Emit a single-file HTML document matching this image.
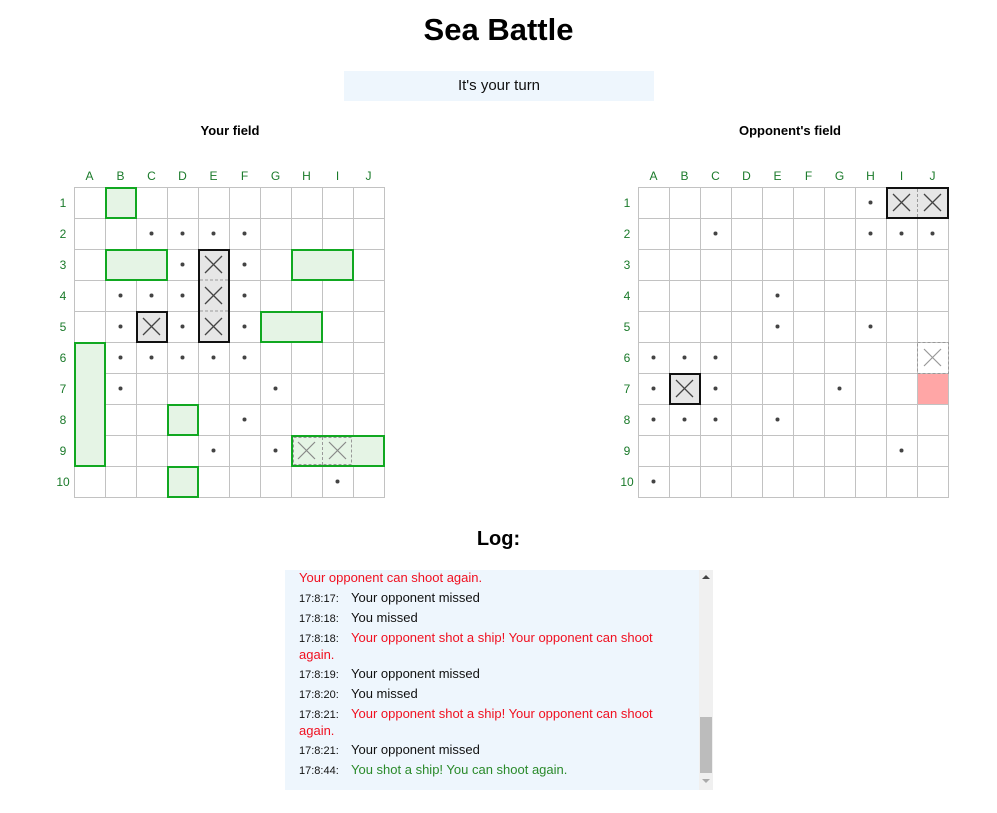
<!DOCTYPE html>
<html><head><meta charset="utf-8"><style>
body{margin:0;background:#fff;font-family:"Liberation Sans",Arial,sans-serif;width:997px;height:813px;position:relative;overflow:hidden}
.a{position:absolute}
h1{position:absolute;left:0;width:997px;top:12px;margin:0;text-align:center;font-size:31px;font-weight:bold;color:#000}
.status{left:344px;top:71px;width:310px;height:30px;background:#eef6fd;text-align:center;line-height:30px;font-size:15px;color:#111}
.ft{font-size:13px;font-weight:bold;top:123px;text-align:center;width:300px}
.field{width:311px;height:311px;top:187px;background-image:linear-gradient(to right,#c2c2c2 1px,transparent 1px),linear-gradient(#c2c2c2 1px,transparent 1px);background-size:31px 31px}
.ship{position:absolute;box-sizing:border-box;border:2px solid #11a821;background:#e5f4e5}
.sunk{position:absolute;box-sizing:border-box;border:2px solid #111;background:#e6e6e6}
.cols,.rows{font-size:12px;color:#1a7a2a}
.cols span{position:absolute;top:0;width:31px;text-align:center}
.rows span{position:absolute;left:0;width:20px;text-align:center}
.log{left:285px;top:570px;width:428px;height:220px;background:#eef6fd;overflow:hidden}
.e{position:absolute;left:14px;width:390px;font-size:13px;line-height:16px;color:#111}
.e i{font-style:normal;font-size:11px;display:inline-block;width:52px}
.r{color:#f01020}.g{color:#2a8a2a}
</style></head><body>
<h1>Sea Battle</h1>
<div class="a status">It's your turn</div>
<div class="a ft" style="left:80px">Your field</div>
<div class="a ft" style="left:640px">Opponent's field</div>

<div class="a cols" style="left:74px;top:169px"><span style="left:0">A</span><span style="left:31px">B</span><span style="left:62px">C</span><span style="left:93px">D</span><span style="left:124px">E</span><span style="left:155px">F</span><span style="left:186px">G</span><span style="left:217px">H</span><span style="left:248px">I</span><span style="left:279px">J</span></div>
<div class="a cols" style="left:638px;top:169px"><span style="left:0">A</span><span style="left:31px">B</span><span style="left:62px">C</span><span style="left:93px">D</span><span style="left:124px">E</span><span style="left:155px">F</span><span style="left:186px">G</span><span style="left:217px">H</span><span style="left:248px">I</span><span style="left:279px">J</span></div>
<div class="a rows" style="left:53px;top:196px"><span style="top:0">1</span><span style="top:31px">2</span><span style="top:62px">3</span><span style="top:93px">4</span><span style="top:124px">5</span><span style="top:155px">6</span><span style="top:186px">7</span><span style="top:217px">8</span><span style="top:248px">9</span><span style="top:279px">10</span></div>
<div class="a rows" style="left:617px;top:196px"><span style="top:0">1</span><span style="top:31px">2</span><span style="top:62px">3</span><span style="top:93px">4</span><span style="top:124px">5</span><span style="top:155px">6</span><span style="top:186px">7</span><span style="top:217px">8</span><span style="top:248px">9</span><span style="top:279px">10</span></div>

<div class="a field" style="left:74px">
<div class="ship" style="left:31px;top:0;width:32px;height:32px"></div>
<div class="ship" style="left:31px;top:62px;width:63px;height:32px"></div>
<div class="ship" style="left:217px;top:62px;width:63px;height:32px"></div>
<div class="ship" style="left:186px;top:124px;width:63px;height:32px"></div>
<div class="ship" style="left:0;top:155px;width:32px;height:125px"></div>
<div class="ship" style="left:93px;top:217px;width:32px;height:32px"></div>
<div class="ship" style="left:217px;top:248px;width:94px;height:32px"></div>
<div class="ship" style="left:93px;top:279px;width:32px;height:32px"></div>
<div class="sunk" style="left:124px;top:62px;width:32px;height:94px"></div>
<div class="sunk" style="left:62px;top:124px;width:32px;height:32px"></div>
<svg class="a" style="left:0;top:0" width="311" height="311">
<g stroke="#999" stroke-dasharray="3,2" fill="none"><line x1="126" y1="93" x2="154" y2="93"/><line x1="126" y1="124" x2="154" y2="124"/><rect x="219.5" y="250.5" width="58" height="27"/><line x1="248.5" y1="250" x2="248.5" y2="278"/></g>
<g stroke="#444" stroke-width="1.3"><path d="M131 69L148 86M148 69L131 86M131 100L148 117M148 100L131 117M131 131L148 148M148 131L131 148M69 131L86 148M86 131L69 148"/></g>
<g stroke="#888" stroke-width="1.2"><path d="M224 255L241 272M241 255L224 272M255 255L272 272M272 255L255 272"/></g>
<g fill="#444">
<circle cx="77.5" cy="46.5" r="2"/><circle cx="108.5" cy="46.5" r="2"/><circle cx="139.5" cy="46.5" r="2"/><circle cx="170.5" cy="46.5" r="2"/>
<circle cx="108.5" cy="77.5" r="2"/><circle cx="170.5" cy="77.5" r="2"/>
<circle cx="46.5" cy="108.5" r="2"/><circle cx="77.5" cy="108.5" r="2"/><circle cx="108.5" cy="108.5" r="2"/><circle cx="170.5" cy="108.5" r="2"/>
<circle cx="46.5" cy="139.5" r="2"/><circle cx="108.5" cy="139.5" r="2"/><circle cx="170.5" cy="139.5" r="2"/>
<circle cx="46.5" cy="170.5" r="2"/><circle cx="77.5" cy="170.5" r="2"/><circle cx="108.5" cy="170.5" r="2"/><circle cx="139.5" cy="170.5" r="2"/><circle cx="170.5" cy="170.5" r="2"/>
<circle cx="46.5" cy="201.5" r="2"/><circle cx="201.5" cy="201.5" r="2"/>
<circle cx="170.5" cy="232.5" r="2"/>
<circle cx="139.5" cy="263.5" r="2"/><circle cx="201.5" cy="263.5" r="2"/>
<circle cx="263.5" cy="294.5" r="2"/>
</g></svg>
</div>

<div class="a field" style="left:638px">
<div class="sunk" style="left:248px;top:0;width:63px;height:32px"></div>
<div class="sunk" style="left:31px;top:186px;width:32px;height:32px"></div>
<div class="a" style="left:280px;top:187px;width:30px;height:30px;background:#ffa6a6"></div>
<svg class="a" style="left:0;top:0" width="311" height="311">
<g stroke="#999" stroke-dasharray="3,2" fill="none"><line x1="279.5" y1="2" x2="279.5" y2="30"/><rect x="279.5" y="155.5" width="31" height="31"/></g>
<g stroke="#444" stroke-width="1.3"><path d="M255 7L272 24M272 7L255 24M286 7L303 24M303 7L286 24M38 193L55 210M55 193L38 210"/></g>
<g stroke="#999" stroke-width="1.2"><path d="M286 162L303 179M303 162L286 179"/></g>
<g fill="#444">
<circle cx="232.5" cy="15.5" r="2"/>
<circle cx="77.5" cy="46.5" r="2"/><circle cx="232.5" cy="46.5" r="2"/><circle cx="263.5" cy="46.5" r="2"/><circle cx="294.5" cy="46.5" r="2"/>
<circle cx="139.5" cy="108.5" r="2"/>
<circle cx="139.5" cy="139.5" r="2"/><circle cx="232.5" cy="139.5" r="2"/>
<circle cx="15.5" cy="170.5" r="2"/><circle cx="46.5" cy="170.5" r="2"/><circle cx="77.5" cy="170.5" r="2"/>
<circle cx="15.5" cy="201.5" r="2"/><circle cx="77.5" cy="201.5" r="2"/><circle cx="201.5" cy="201.5" r="2"/>
<circle cx="15.5" cy="232.5" r="2"/><circle cx="46.5" cy="232.5" r="2"/><circle cx="77.5" cy="232.5" r="2"/><circle cx="139.5" cy="232.5" r="2"/>
<circle cx="263.5" cy="263.5" r="2"/>
<circle cx="15.5" cy="294.5" r="2"/>
</g></svg>
</div>

<div class="a" style="left:0;width:997px;top:528px;text-align:center;font-size:20px;font-weight:bold">Log:</div>
<div class="a log">
<div class="e r" style="top:0">Your opponent can shoot again.</div>
<div class="e" style="top:20px"><i>17:8:17:</i>Your opponent missed</div>
<div class="e" style="top:40px"><i>17:8:18:</i>You missed</div>
<div class="e" style="top:60px"><i>17:8:18:</i><span class="r">Your opponent shot a ship! Your opponent can shoot again.</span></div>
<div class="e" style="top:96px"><i>17:8:19:</i>Your opponent missed</div>
<div class="e" style="top:116px"><i>17:8:20:</i>You missed</div>
<div class="e" style="top:136px"><i>17:8:21:</i><span class="r">Your opponent shot a ship! Your opponent can shoot again.</span></div>
<div class="e" style="top:172px"><i>17:8:21:</i>Your opponent missed</div>
<div class="e" style="top:192px"><i>17:8:44:</i><span class="g">You shot a ship! You can shoot again.</span></div>
<div class="a" style="left:414px;top:0;width:14px;height:220px;background:#f0f0f0"></div>
<div class="a" style="left:415px;top:147px;width:12px;height:56px;background:#bcbcbc"></div>
<div class="a" style="left:417px;top:5px;width:0;height:0;border-left:4px solid transparent;border-right:4px solid transparent;border-bottom:4px solid #444"></div>
<div class="a" style="left:417px;top:209px;width:0;height:0;border-left:4px solid transparent;border-right:4px solid transparent;border-top:4px solid #aaa"></div>
</div>
</body></html>
